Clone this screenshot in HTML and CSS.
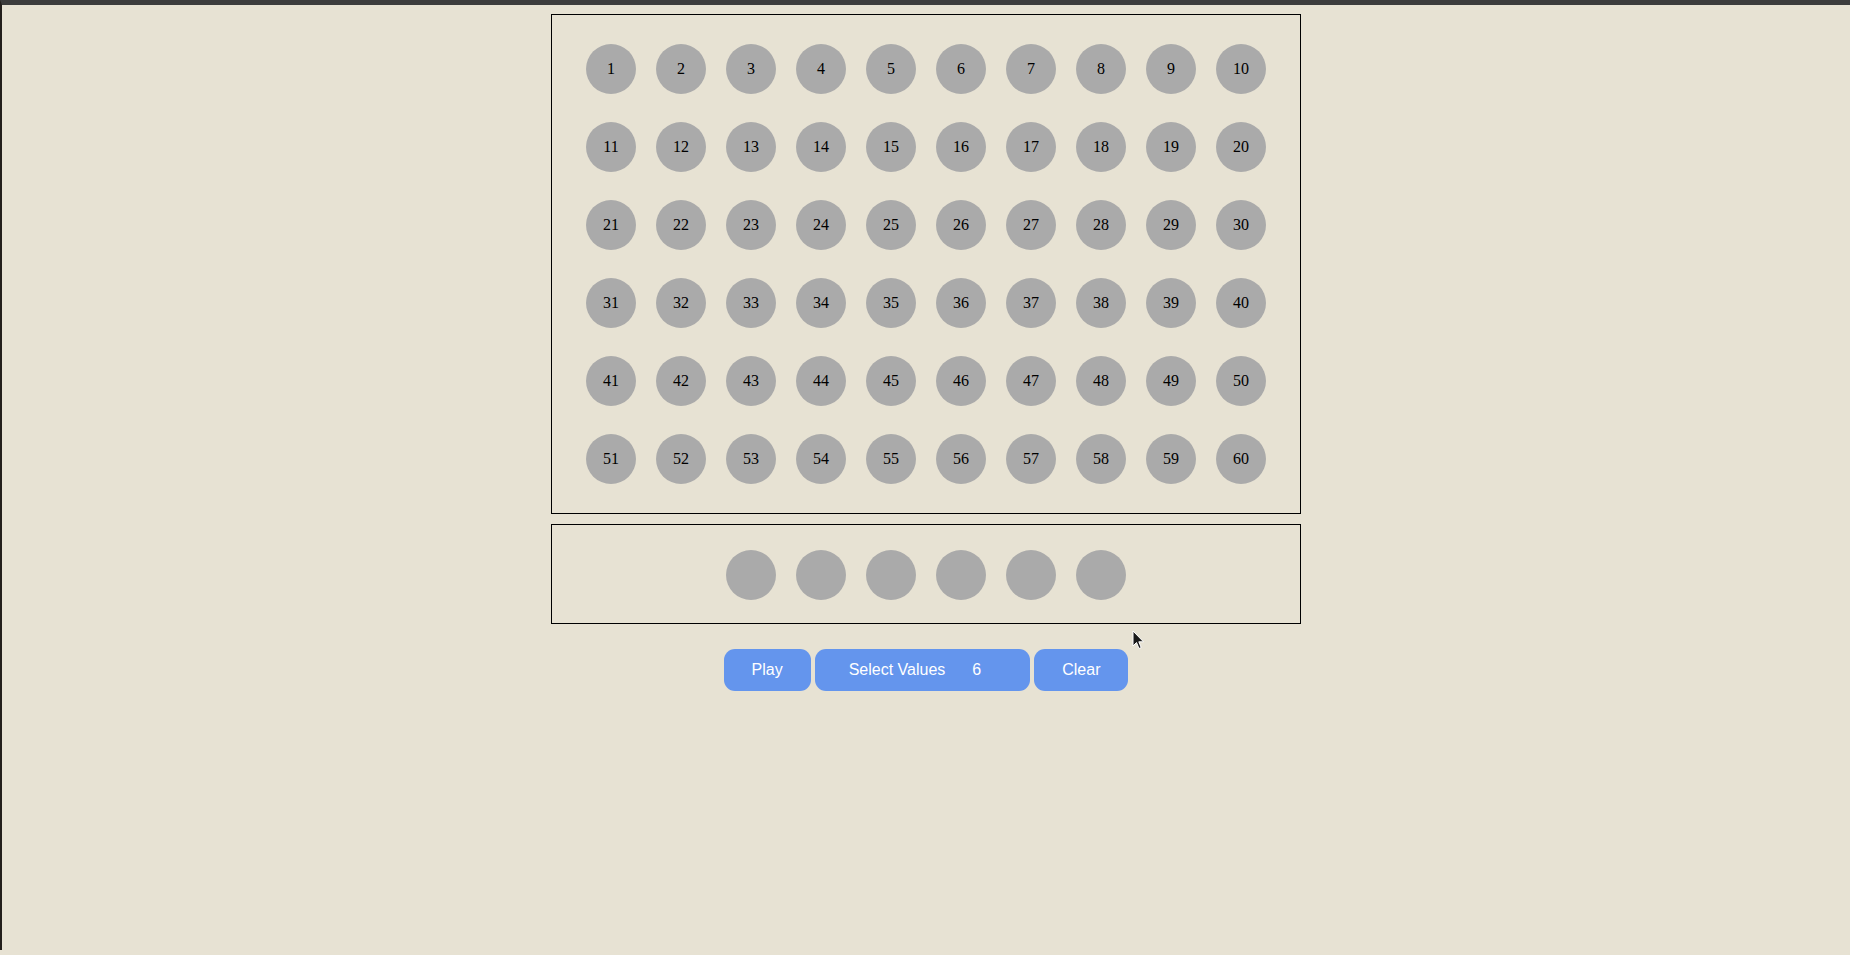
FILE: index.html
```html
<!DOCTYPE html>
<html>
<head>
<meta charset="utf-8">
<title>Lottery</title>
<link rel="stylesheet" href="styles.css">
</head>
<body>
<div class="page">
  <div class="board">
    <div class="ball">1</div><div class="ball">2</div><div class="ball">3</div><div class="ball">4</div><div class="ball">5</div><div class="ball">6</div><div class="ball">7</div><div class="ball">8</div><div class="ball">9</div><div class="ball">10</div>
    <div class="ball">11</div><div class="ball">12</div><div class="ball">13</div><div class="ball">14</div><div class="ball">15</div><div class="ball">16</div><div class="ball">17</div><div class="ball">18</div><div class="ball">19</div><div class="ball">20</div>
    <div class="ball">21</div><div class="ball">22</div><div class="ball">23</div><div class="ball">24</div><div class="ball">25</div><div class="ball">26</div><div class="ball">27</div><div class="ball">28</div><div class="ball">29</div><div class="ball">30</div>
    <div class="ball">31</div><div class="ball">32</div><div class="ball">33</div><div class="ball">34</div><div class="ball">35</div><div class="ball">36</div><div class="ball">37</div><div class="ball">38</div><div class="ball">39</div><div class="ball">40</div>
    <div class="ball">41</div><div class="ball">42</div><div class="ball">43</div><div class="ball">44</div><div class="ball">45</div><div class="ball">46</div><div class="ball">47</div><div class="ball">48</div><div class="ball">49</div><div class="ball">50</div>
    <div class="ball">51</div><div class="ball">52</div><div class="ball">53</div><div class="ball">54</div><div class="ball">55</div><div class="ball">56</div><div class="ball">57</div><div class="ball">58</div><div class="ball">59</div><div class="ball">60</div>
  </div>
  <div class="picks">
    <div class="ball"></div><div class="ball"></div><div class="ball"></div><div class="ball"></div><div class="ball"></div><div class="ball"></div>
  </div>
  <div class="controls">
    <button class="btn">Play</button>
    <button class="btn select">Select Values<span class="count">6</span></button>
    <button class="btn">Clear</button>
  </div>
</div>
<svg class="cursor" width="13" height="20" viewBox="0 0 13 20"><path d="M1 1 L1 16 L4.5 12.5 L7 18.5 L9.2 17.6 L6.8 11.8 L11.5 11.8 Z" fill="#1a1a1a" stroke="#ffffff" stroke-width="1"/></svg>
</body>
</html>
```

FILE: styles.css
```css
html, body {
  margin: 0;
  padding: 0;
}
body {
  background: #e7e2d3;
  border-top: 5px solid #3c3c3c;
  border-left: 2px solid #231f1b;
  min-height: 950px;
  box-sizing: border-box;
  font-family: "Liberation Serif", "Times New Roman", serif;
}
.page {
  width: 750px;
  margin: 9px auto 0;
}
.board {
  border: 1px solid #000;
  padding: 15px 24px;
  display: flex;
  flex-wrap: wrap;
}
.ball {
  width: 50px;
  height: 50px;
  margin: 14px 10px;
  border-radius: 50%;
  background: #aaaaaa;
  display: flex;
  align-items: center;
  justify-content: center;
  font-size: 16px;
  color: #000;
}
.picks {
  margin-top: 10px;
  border: 1px solid #000;
  height: 100px;
  box-sizing: border-box;
  padding-top: 11px;
  display: flex;
  justify-content: center;
  align-items: flex-start;
}
.controls {
  margin-top: 25px;
  display: flex;
  justify-content: center;
  gap: 4px;
}
.btn {
  height: 42px;
  padding: 0 28px;
  border: none;
  border-radius: 11px;
  background: #6495ed;
  color: #fff;
  font-family: "Liberation Sans", Arial, sans-serif;
  font-size: 16px;
}
.select {
  padding: 0 49px 0 34px;
}
.count {
  margin-left: 27px;
}
.cursor {
  position: absolute;
  left: 1132px;
  top: 630px;
}
```
